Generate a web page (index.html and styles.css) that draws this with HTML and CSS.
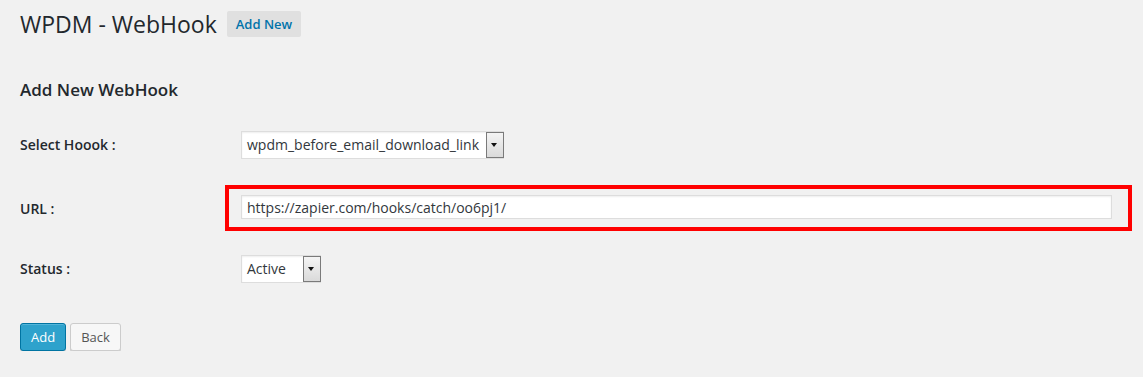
FILE: index.html
```html
<!DOCTYPE html>
<html lang="en">
<head>
    <meta charset="UTF-8">
    <meta name="viewport" content="width=device-width, initial-scale=1.0">
    <title>WPDM - WebHook</title>
    <link rel="stylesheet" href="styles.css">
</head>
<body>
<div class="wrap">
    <div class="page-head">
        <h1>WPDM - WebHook</h1>
        <a class="add-new" href="#">Add New</a>
    </div>

    <h3 class="section-title">Add New WebHook</h3>

    <form class="hook-form">
        <div class="form-row">
            <label class="form-label">Select Hoook :</label>
            <div class="select select_hook">
                <span class="select-value">wpdm_before_email_download_link</span>
                <span class="select-arrow"></span>
            </div>
        </div>
        <div class="form-row">
            <label class="form-label" for="url">URL :</label>
            <div class="field-wide">
                <input type="text" id="url" class="text-input" value="https://zapier.com/hooks/catch/oo6pj1/">
                <div class="highlight"></div>
            </div>
        </div>
        <div class="form-row">
            <label class="form-label">Status :</label>
            <div class="select select_status">
                <span class="select-value">Active</span>
                <span class="select-arrow"></span>
            </div>
        </div>
        <div class="actions">
            <button type="button" class="btn btn_primary">Add</button>
            <button type="button" class="btn">Back</button>
        </div>
    </form>
</div>
</body>
</html>
```

FILE: styles.css
```css
body {
    margin: 0;
    background: #f1f1f1;
    color: #23282d;
    font-family: "Open Sans", "Noto Sans", sans-serif;
    font-size: 13px;
}
.wrap {
    padding: 11px 20px 0 20px;
}
.page-head {
    display: flex;
    align-items: center;
    height: 26px;
}
h1 {
    margin: 0 10px 0 0;
    font-size: 23px;
    font-weight: 400;
    line-height: 26px;
}
.add-new {
    display: block;
    height: 26px;
    line-height: 26px;
    padding: 0 9px;
    background: #e0e0e0;
    border-radius: 2px;
    color: #0073aa;
    font-size: 13px;
    font-weight: 600;
    text-decoration: none;
}
.section-title {
    margin: 42px 0 0 0;
    font-size: 17px;
    font-weight: 600;
    line-height: 22px;
}
.hook-form {
    margin-top: 12px;
}
.form-row {
    display: flex;
    align-items: flex-start;
    padding: 18px 0;
}
.form-label {
    width: 221px;
    flex-shrink: 0;
    padding-top: 4px;
    line-height: 20px;
    font-size: 14px;
    font-weight: 600;
}
.select {
    display: flex;
    height: 28px;
    box-sizing: border-box;
    background: #fff;
    border: 1px solid #ddd;
    box-shadow: inset 0 1px 2px rgba(0, 0, 0, .07);
    color: #32373c;
    font-size: 14px;
}
.select_hook {
    width: 263px;
}
.select_status {
    width: 80px;
}
.select-value {
    flex: 1;
    padding-left: 5px;
    line-height: 26px;
    white-space: nowrap;
    overflow: hidden;
}
.select-arrow {
    position: relative;
    width: 16px;
    margin: 0 -1px 0 0;
    border: 1px solid #7a7a7a;
    background: linear-gradient(#f4f4f4, #dadada);
}
.select-arrow::after {
    content: "";
    position: absolute;
    left: 4px;
    top: 10px;
    border-left: 3.5px solid transparent;
    border-right: 3.5px solid transparent;
    border-top: 4px solid #111;
}
.field-wide {
    position: relative;
    flex: 1;
    margin-right: 11px;
}
.text-input {
    display: block;
    width: 100%;
    height: 24px;
    box-sizing: border-box;
    margin: 0;
    padding: 0 5px;
    border: 1px solid #ddd;
    box-shadow: inset 0 1px 2px rgba(0, 0, 0, .07);
    background: #fff;
    color: #32373c;
    font-family: "Open Sans", "Noto Sans", sans-serif;
    font-size: 14px;
}
.highlight {
    position: absolute;
    left: -16px;
    top: -10px;
    right: -20px;
    bottom: -12px;
    border: 4px solid #ff0000;
    pointer-events: none;
}
.actions {
    display: flex;
    gap: 4px;
    margin-top: 22px;
}
.btn {
    height: 28px;
    padding: 0 10px;
    border: 1px solid #ccc;
    border-radius: 3px;
    background: #f7f7f7;
    box-shadow: 0 1px 0 #ccc;
    color: #555;
    font-family: "Open Sans", "Noto Sans", sans-serif;
    font-size: 13px;
    line-height: 26px;
}
.btn_primary {
    background: #2ea2cc;
    border-color: #0074a2;
    box-shadow: inset 0 1px 0 rgba(120, 200, 230, .5), 0 1px 0 rgba(0, 0, 0, .15);
    color: #fff;
}
```
